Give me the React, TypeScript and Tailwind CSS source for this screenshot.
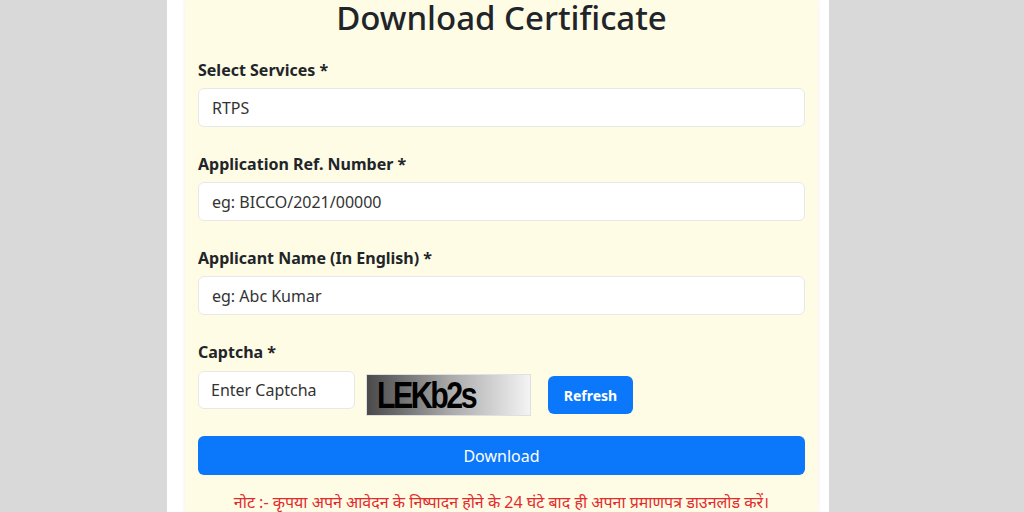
import React, { useState } from 'react';

const font = { fontFamily: '"Noto Sans", "Open Sans", sans-serif' };

const Field: React.FC<{ label: string; placeholder?: string; value?: string }> = ({ label, placeholder, value }) => (
  <div className="mb-[25px]">
    <label className="block text-[16px] font-bold leading-[24px] text-[#212529] mb-[6px]">{label}</label>
    <input
      type="text"
      defaultValue={value}
      placeholder={placeholder}
      className="w-full h-[39px] bg-white border border-[#e8e8e8] rounded-[6px] px-[13px] text-[16px] text-[#333] placeholder:text-[#333] focus:outline-none"
    />
  </div>
);

export default function App() {
  const [captcha, setCaptcha] = useState('');

  return (
    <div className="min-h-screen h-[512px] overflow-hidden bg-[#d9d9d9]" style={font}>
      <div className="ml-[167px] w-[662px] h-full bg-white pl-[18px] pr-[11px]">
        <div className="h-full bg-[#fffce6] px-[13px] pt-px shadow-[0_0_4px_rgba(0,0,0,0.08)]">
          <h1 className="text-center text-[33px] leading-[38px] text-[#212529] font-medium -mt-[2px] mb-[21px]">Download Certificate</h1>

          <Field label="Select Services *" value="RTPS" />
          <Field label="Application Ref. Number *" placeholder="eg: BICCO/2021/00000" />
          <Field label="Applicant Name (In English) *" placeholder="eg: Abc Kumar" />

          <label className="block text-[16px] font-bold leading-[24px] text-[#212529] mb-[7px]">Captcha *</label>
          <div className="flex items-start">
            <input
              type="text"
              value={captcha}
              onChange={e => setCaptcha(e.target.value)}
              placeholder="Enter Captcha"
              className="w-[157px] h-[38px] bg-white border border-[#e8e8e8] rounded-[6px] px-[12px] text-[16px] text-[#333] placeholder:text-[#333] focus:outline-none"
            />
            <div className="ml-[11px] mt-[3px] w-[165px] h-[42px] border border-[#e0e0e0] bg-gradient-to-r from-[#4a4a4a] via-[#a8a8a8] to-[#f4f4f4] flex items-center pl-[10px] overflow-hidden">
              <span className="text-[37px] leading-none font-bold text-black tracking-[-3px] scale-x-[0.82] origin-left" style={{ fontFamily: '"Liberation Sans", sans-serif' }}>LEKb2s</span>
            </div>
            <button className="ml-[17px] mt-[5px] w-[85px] h-[38px] rounded-[6px] bg-[#0b78fb] text-white text-[14px] font-bold">Refresh</button>
          </div>

          <button className="mt-[20px] w-full h-[39px] rounded-[6px] bg-[#0b78fb] text-white text-[16px]">Download</button>

          <p className="mt-[15px] text-center text-[16px] text-[#e32b2b]" style={{ fontFamily: '"Noto Sans", "Noto Sans Devanagari", sans-serif' }}>
            नोट :- कृपया अपने आवेदन के निष्पादन होने के 24 घंटे बाद ही अपना प्रमाणपत्र डाउनलोड करें।
          </p>
        </div>
      </div>
    </div>
  );
}
